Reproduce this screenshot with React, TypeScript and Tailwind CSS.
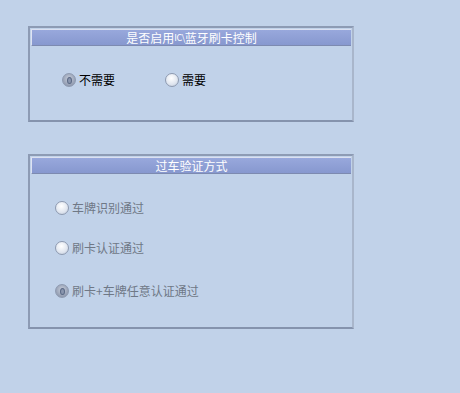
import React from 'react'

const font = { fontFamily: '"Noto Sans CJK SC", "Liberation Sans", sans-serif' }

function Radio({ checked }: { checked: boolean }) {
  return (
    <span
      className={
        'inline-flex h-[14px] w-[14px] shrink-0 items-center justify-center rounded-full border border-[#8e9ab0] ' +
        (checked
          ? 'bg-[radial-gradient(circle_at_50%_40%,#c7cedb,#7f8aa2)]'
          : 'bg-[radial-gradient(circle_at_45%_35%,#ffffff,#dfe5ef_60%,#b7c2d4)]')
      }
    >
      {checked && <span className="h-[7px] w-[5px] rounded-[50%] border border-[#5c6a86] bg-[#8a96ae]" />}
    </span>
  )
}

function Option({ label, checked, muted }: { label: string; checked: boolean; muted?: boolean }) {
  return (
    <div className="flex items-center gap-[3px]">
      <Radio checked={checked} />
      <span className={'text-[12px] leading-none ' + (muted ? 'text-[#6f7886]' : 'text-black')}>{label}</span>
    </div>
  )
}

function Panel({ title, height, children }: { title: React.ReactNode; height: string; children: React.ReactNode }) {
  return (
    <section className={'w-[326px] border-2 border-[#8d9bb4] border-r-[#a9b6cb] border-b-[#8593ad] ' + height}>
      <div className="mx-px mt-px flex h-[17px] items-center justify-center border-t border-l border-t-white/70 border-l-white/70 border-b border-b-[#7d8ab0] bg-gradient-to-b from-[#98a8dc] to-[#8798cf] text-[12px] leading-none text-white">
        {title}
      </div>
      {children}
    </section>
  )
}

export default function App() {
  return (
    <div className="min-h-[393px] w-[460px] bg-[#c1d2e9] pt-[26px] pl-[28px]" style={font}>
      <Panel
        title={
          <>
            是否启用<span className="text-[9px] tracking-[-0.5px]">IC\</span>蓝牙刷卡控制
          </>
        }
        height="h-[96px]"
      >
        <div className="flex pt-[27px] pl-[32px]">
          <div className="w-[103px]">
            <Option label="不需要" checked />
          </div>
          <Option label="需要" checked={false} />
        </div>
      </Panel>
      <div className="h-[32px]" />
      <Panel title="过车验证方式" height="h-[175px]">
        <div className="flex flex-col pt-[27px] pl-[25px]">
          <div className="h-[40px]">
            <Option label="车牌识别通过" checked={false} muted />
          </div>
          <div className="h-[43px]">
            <Option label="刷卡认证通过" checked={false} muted />
          </div>
          <Option label="刷卡+车牌任意认证通过" checked muted />
        </div>
      </Panel>
    </div>
  )
}
